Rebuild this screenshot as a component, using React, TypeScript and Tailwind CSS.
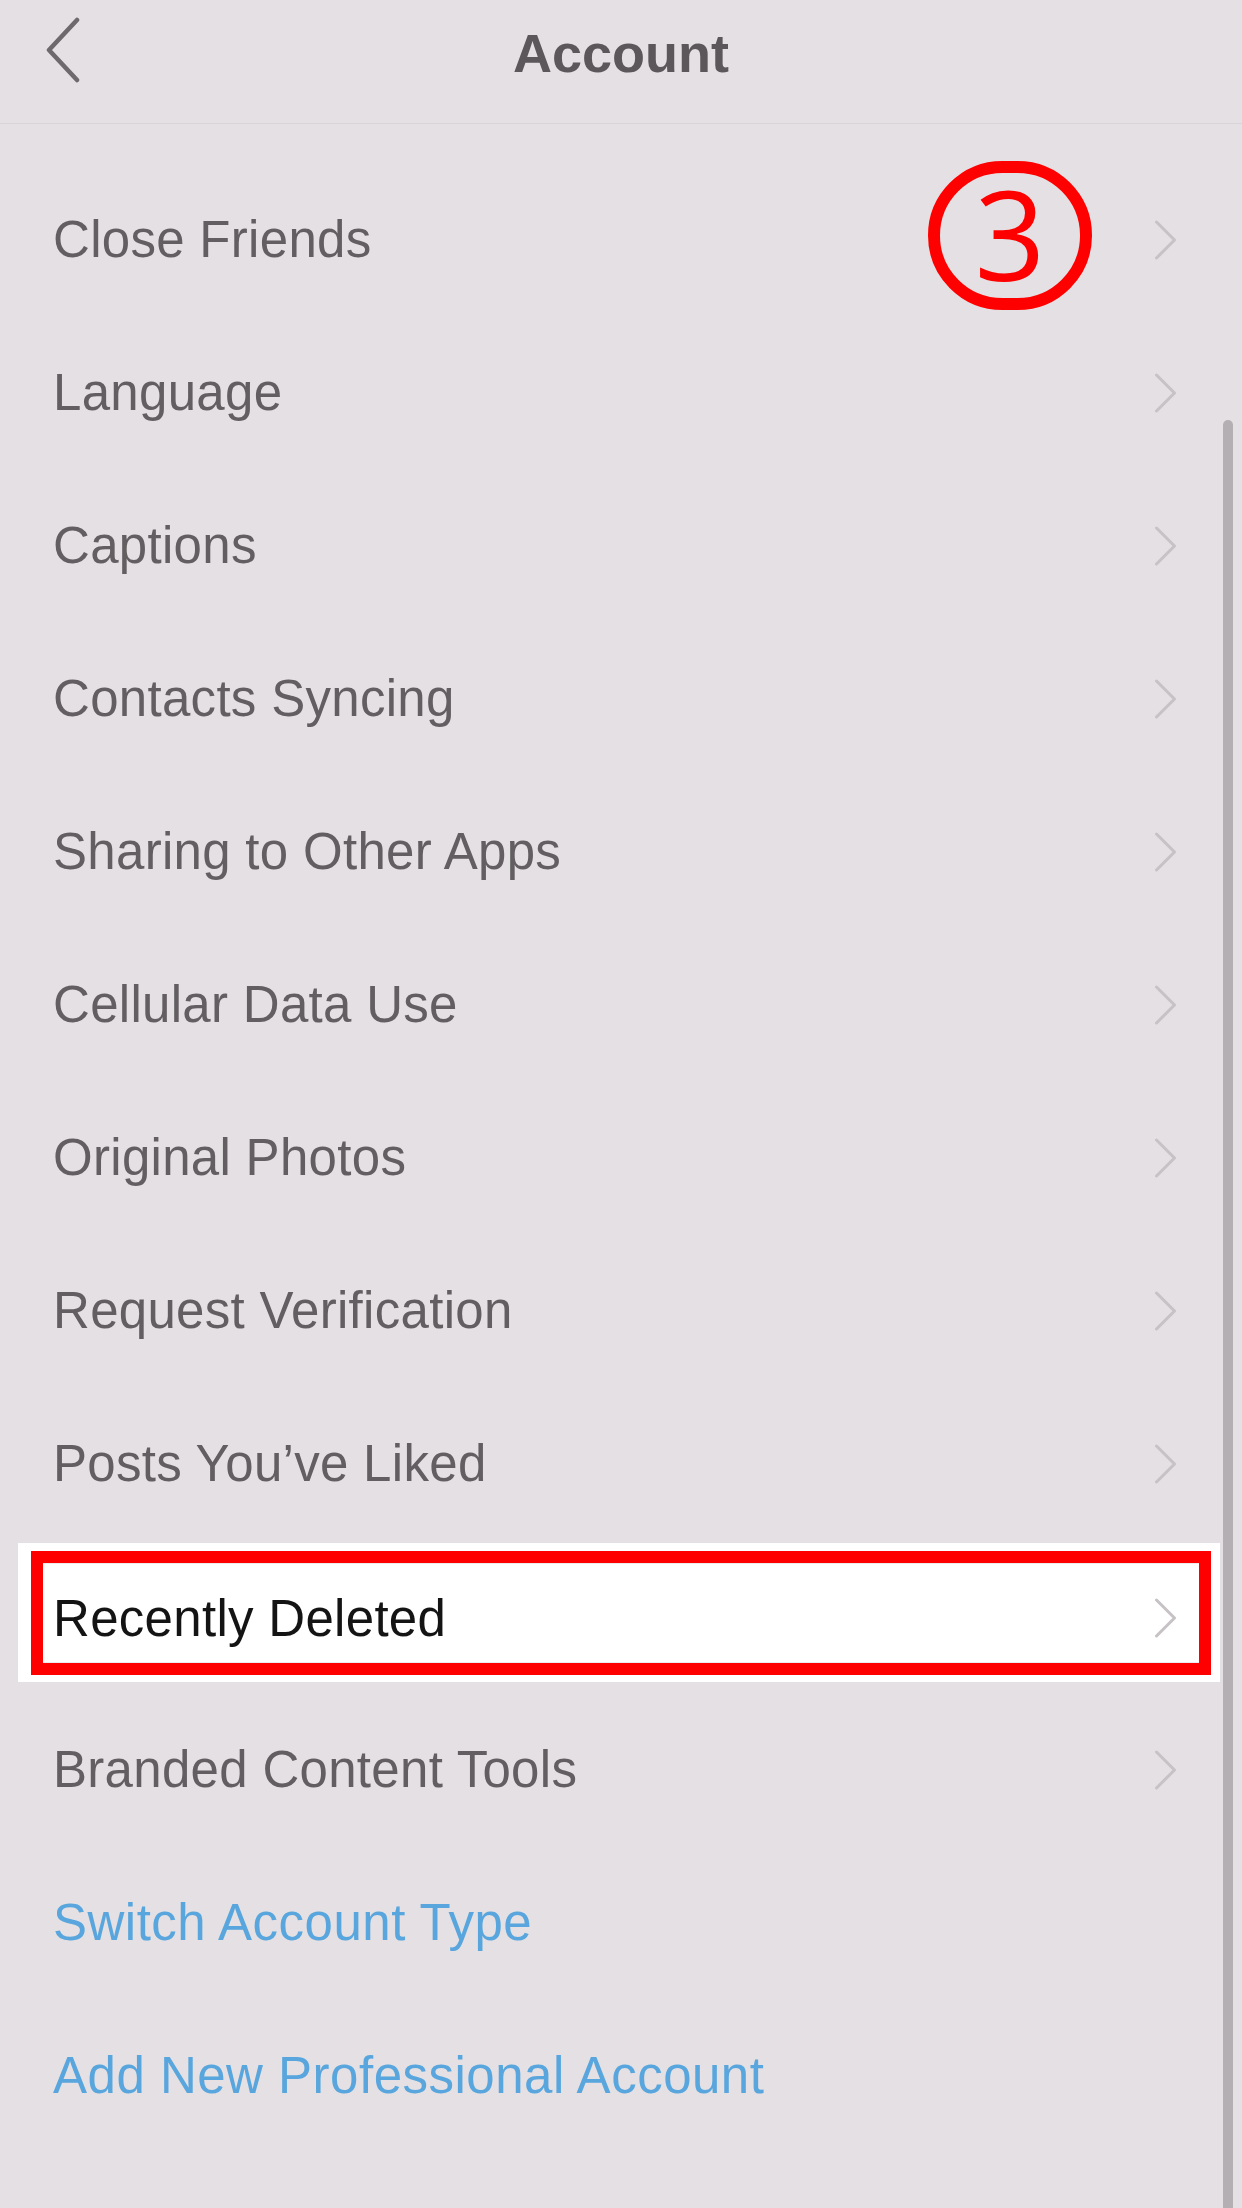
const items = [
  'Close Friends',
  'Language',
  'Captions',
  'Contacts Syncing',
  'Sharing to Other Apps',
  'Cellular Data Use',
  'Original Photos',
  'Request Verification',
  'Posts You’ve Liked',
  'Recently Deleted',
  'Branded Content Tools',
];

const links = ['Switch Account Type', 'Add New Professional Account'];

function Chevron() {
  return (
    <svg width="23" height="40" viewBox="0 0 23 40" fill="none">
      <path d="M2.5 2 L20.5 20 L2.5 38" stroke="#c6c2c5" strokeWidth="3" strokeLinecap="round" strokeLinejoin="round" />
    </svg>
  );
}

function Row({ label }: { label: string }) {
  return (
    <div className="h-[153px] flex items-center justify-between pl-[53px] pr-[65px]">
      <span className="text-[51px] leading-none tracking-[0.3px] text-[#625e61]">{label}</span>
      <Chevron />
    </div>
  );
}

function HighlightedRow({ label }: { label: string }) {
  return (
    <div className="h-[153px] pl-[18px] pr-[22px] pt-[3px]">
      <div className="h-[139px] bg-white pt-[8px] pb-[7px] pl-[13px] pr-[9px]">
        <div className="h-full border-[12px] border-[#ff0000]">
          <div className="h-full flex items-center justify-between pl-[10px] pr-[22px] pt-[10px] border-y border-[#ececec]">
            <span className="text-[51px] leading-none tracking-[0.3px] text-[#141414]">{label}</span>
            <Chevron />
          </div>
        </div>
      </div>
    </div>
  );
}

export default function App() {
  return (
    <div className="relative w-[1242px] h-[2208px] overflow-hidden bg-[#e4e0e3] font-['Liberation_Sans',Arial,sans-serif]">
      <header className="h-[124px] flex items-start border-b border-[#d8d4d7]">
        <div className="w-[200px] pl-[45px] pt-[17px]">
          <svg width="36" height="66" viewBox="0 0 36 66" fill="none">
            <path d="M32 3 L4 33 L32 63" stroke="#6d696c" strokeWidth="4.5" strokeLinecap="round" strokeLinejoin="round" />
          </svg>
        </div>
        <h1 className="flex-1 text-center pt-[23px] text-[54px] leading-[60px] font-bold text-[#5b575a]">Account</h1>
        <div className="w-[200px]" />
      </header>

      <div className="pt-[39px]">
        {items.map((label) =>
          label === 'Recently Deleted' ? (
            <HighlightedRow key={label} label={label} />
          ) : (
            <Row key={label} label={label} />
          )
        )}
        {links.map((label) => (
          <div key={label} className="h-[153px] flex items-center pl-[53px]">
            <span className="text-[51px] leading-none tracking-[0.5px] text-[#58a6dd]">{label}</span>
          </div>
        ))}
      </div>

      {/* step marker */}
      <div className="absolute left-[928px] top-[161px] w-[164px] h-[149px] rounded-full border-[12px] border-[#ff0000] flex items-center justify-center">
        <span className="text-[124px] leading-none text-[#ff0000] font-['Open_Sans',sans-serif] -mt-[6px]">3</span>
      </div>

      {/* scrollbar */}
      <div className="absolute left-[1223px] top-[420px] w-[10px] h-[1900px] rounded-full bg-[#b3afb2]" />
    </div>
  );
}
